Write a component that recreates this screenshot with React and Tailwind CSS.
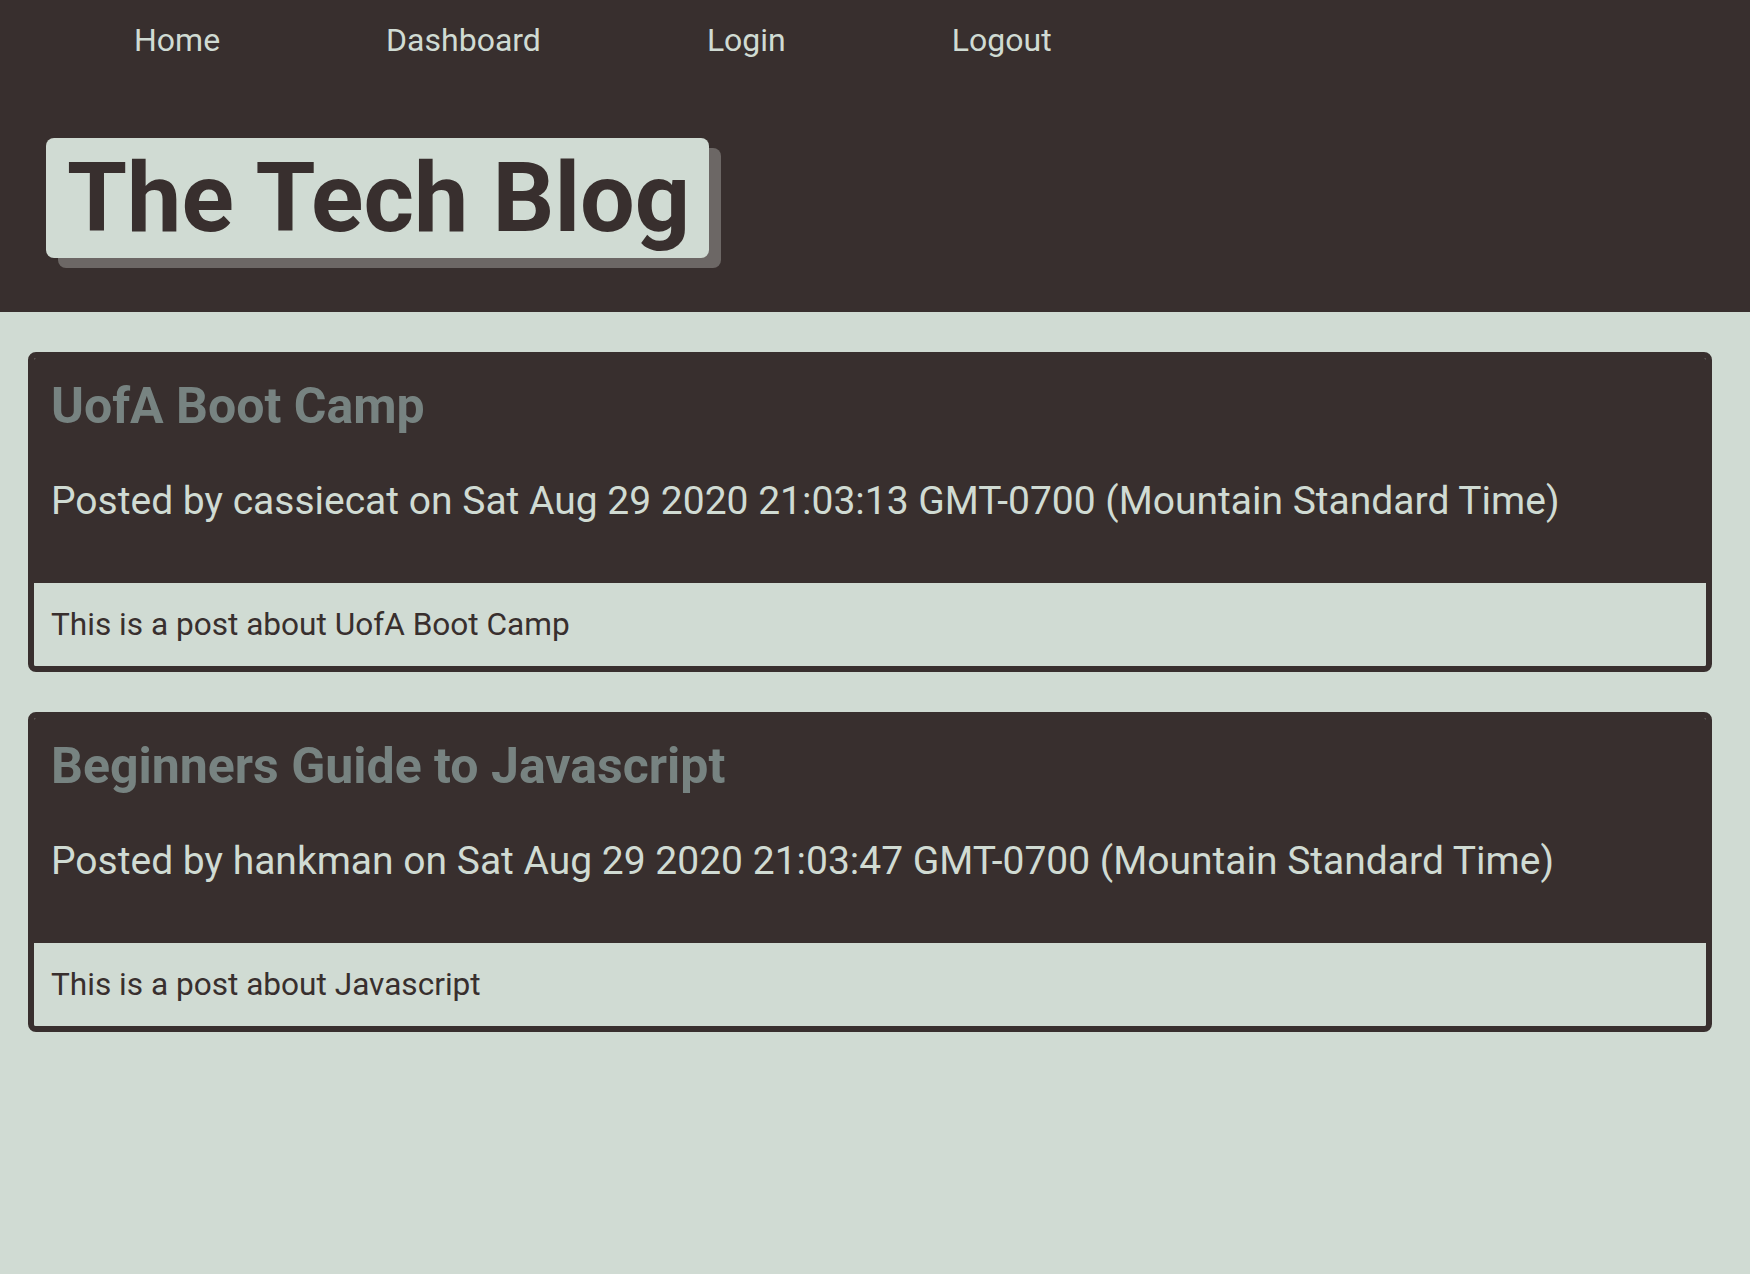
import React from 'react';

const posts = [
  {
    title: 'UofA Boot Camp',
    author: 'cassiecat',
    date: 'Sat Aug 29 2020 21:03:13 GMT-0700 (Mountain Standard Time)',
    body: 'This is a post about UofA Boot Camp',
  },
  {
    title: 'Beginners Guide to Javascript',
    author: 'hankman',
    date: 'Sat Aug 29 2020 21:03:47 GMT-0700 (Mountain Standard Time)',
    body: 'This is a post about Javascript',
  },
];

const PostCard = ({ post }) => (
  <div className="border-[6px] border-[#382f2e] rounded-[8px] overflow-hidden">
    <div className="h-[225px] bg-[#382f2e] px-[17px] pt-[18px]">
      <h2 className="text-[50px] leading-[1.2] font-bold text-[#778381]">{post.title}</h2>
      <p className="mt-[42px] text-[39px] leading-[1.2] text-[#d0dbd3]">
        Posted by {post.author} on {post.date}
      </p>
    </div>
    <div className="h-[83px] bg-[#d0dbd3] flex items-center px-[17px]">
      <p className="text-[31.6px] leading-[1.2] text-[#382f2e]">{post.body}</p>
    </div>
  </div>
);

const App = () => {
  return (
    <div className="min-h-screen bg-[#d0dbd3] font-['Roboto',sans-serif]">
      <header className="h-[312px] bg-[#382f2e] flex flex-col">
        <nav className="flex gap-[166px] pl-[134px] pt-[21px]">
          {['Home', 'Dashboard', 'Login', 'Logout'].map((item) => (
            <a key={item} href="#" className="text-[32px] leading-[1.2] text-[#d0dbd3]">
              {item}
            </a>
          ))}
        </nav>
        <div className="mt-[79px] ml-[46px]">
          <h1 className="inline-flex items-center h-[120px] pl-[21px] pr-[19px] bg-[#d0dbd3] rounded-[8px] shadow-[12px_10px_0_#6c6765] text-[97px] leading-none font-bold text-[#382f2e]">
            The Tech Blog
          </h1>
        </div>
      </header>
      <main className="flex flex-col gap-[40px] pl-[28px] pr-[38px] pt-[40px]">
        {posts.map((post) => (
          <PostCard key={post.title} post={post} />
        ))}
      </main>
    </div>
  );
};

export default App;
